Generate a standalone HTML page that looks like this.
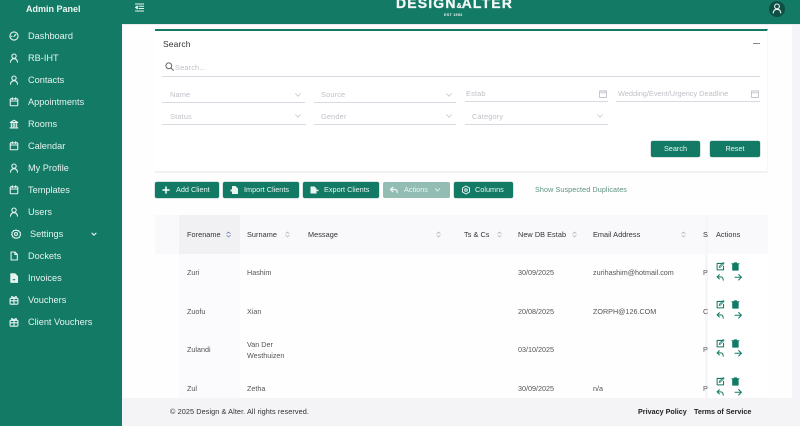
<!DOCTYPE html>
<html lang="en"><head><meta charset="utf-8"><title>Admin Panel</title>
<style>
*{box-sizing:border-box;margin:0;padding:0}
html,body{width:800px;height:426px;overflow:hidden;background:#f5f4f8;font-family:"Liberation Sans",sans-serif}
#r{position:relative;width:800px;height:426px;overflow:hidden;filter:blur(.3px)}
.a{position:absolute}
.t{position:absolute;white-space:nowrap;line-height:12px}
.nav{position:absolute;left:28px;margin-top:.5px;color:#e6f3ef;font-size:9.200px;line-height:14px;white-space:nowrap;letter-spacing:0}
svg{position:absolute;fill:none;stroke-linecap:round;stroke-linejoin:round}
.ni{left:9px;margin-top:1.500px;width:10px;height:10px;stroke:#e6f3ef;stroke-width:1.300}
.ph{color:#c2c0c8;font-size:7.400px;letter-spacing:.15px}
.ln{position:absolute;height:1px;background:#dad8e0}
.chev{width:8px;height:6px;stroke:#cbc9d0;stroke-width:.8}
.btn{position:absolute;height:16px;background:#137a66;border-radius:2px;color:#eaf5f1;font-size:7.300px;line-height:16px;white-space:nowrap;box-shadow:0 0 1px #0c5a4b}
.btn span{position:absolute;top:0}
.btn svg{top:3px;width:10px;height:10px}
.th{color:#333;font-size:7.300px;margin-top:1px;letter-spacing:.05px}
.td{color:#555;font-size:7.200px;margin-top:.5px;letter-spacing:0}
.sort{width:5px;height:7px;stroke:#b8b6bd;stroke-width:.9;margin-top:1px}
.ic{width:8.500px;height:8.500px;stroke:#137a66;stroke-width:1.200}
</style></head><body><div id="r">

<div class="a" style="left:123px;top:24px;width:669px;height:374px;background:#fefefe"></div>
<div class="a" style="left:0;top:0;width:800px;height:24px;background:#137a66"></div>
<div class="a" style="left:123px;top:24px;width:677px;height:1px;background:#eceaf0"></div>
<div class="a" style="left:0;top:0;width:122px;height:426px;background:#137a66"></div>

<div class="t" style="left:26px;top:2px;margin-top:1px;color:#eef7f4;font-size:9px;font-weight:700">Admin Panel</div>
<svg style="left:135px;top:3px;width:9px;height:9px;stroke:#e6f3ef;stroke-width:1" viewBox="0 0 9 9"><path d="M0 1h9M4 3.200h5M4 5.500h5M0 8h9"/><path d="M2.400 3L.4 4.400l2 1.400z" fill="#e6f3ef"/></svg>

<div class="t" style="left:396px;top:-4px;width:116px;text-align:center;color:#f2f8f6;font-size:14px;font-weight:700;line-height:14px;letter-spacing:1.150px;-webkit-text-stroke:.3px #f2f8f6">DESIGN<span style="font-size:7px;letter-spacing:0">&amp;</span>ALTER</div>
<div class="t" style="left:444px;top:12.500px;color:#e6f3ef;font-size:3.800px;font-weight:700;line-height:5px;letter-spacing:.2px">EST 1993</div>

<div class="a" style="left:769px;top:1px;width:16px;height:16px;border-radius:50%;background:#0d4f45"></div>
<svg style="left:772px;top:3px;width:10px;height:11px;stroke:#f2f8f6;stroke-width:1.100" viewBox="0 0 10 11"><circle cx="5" cy="3.400" r="2.400"/><path d="M1.200 10c.3-2.600 1.700-3.700 3.800-3.700S8.500 7.400 8.800 10"/></svg>

<!-- sidebar icons -->
<svg class="ni" style="top:29px" viewBox="0 0 12 12"><circle cx="6" cy="6" r="4.900"/><path d="M6 6.500l2.200-2.500M2.800 6.500h.7"/></svg>
<svg class="ni" style="top:51px" viewBox="0 0 12 12"><circle cx="6" cy="3.800" r="2.600"/><path d="M1.800 11c.3-3 1.800-4.200 4.200-4.200s3.900 1.200 4.200 4.200"/></svg>
<svg class="ni" style="top:73px" viewBox="0 0 12 12"><circle cx="6" cy="3.800" r="2.600"/><path d="M1.800 11c.3-3 1.800-4.200 4.200-4.200s3.900 1.200 4.200 4.200"/></svg>
<svg class="ni" style="top:95px" viewBox="0 0 12 12"><rect x="1.500" y="2.200" width="9" height="8.300" rx=".8"/><path d="M1.500 4.800h9M4 1v2M8 1v2"/></svg>
<svg class="ni" style="top:117px" viewBox="0 0 12 12"><path d="M1.500 4.200L6 1.500l4.500 2.700zM2.800 5.500v4M5 5.500v4M7 5.500v4M9.200 5.500v4M1.200 10.700h9.600"/></svg>
<svg class="ni" style="top:139px" viewBox="0 0 12 12"><rect x="1.500" y="2.200" width="9" height="8.300" rx=".8"/><path d="M1.500 4.800h9M4 1v2M8 1v2"/></svg>
<svg class="ni" style="top:161px" viewBox="0 0 12 12"><circle cx="6" cy="3.800" r="2.600"/><path d="M1.800 11c.3-3 1.800-4.200 4.200-4.200s3.900 1.200 4.200 4.200"/></svg>
<svg class="ni" style="top:183px" viewBox="0 0 12 12"><rect x="1.500" y="2.200" width="9" height="8.300" rx=".8"/><path d="M1.500 4.800h9M4 1v2M8 1v2"/></svg>
<svg class="ni" style="top:205px" viewBox="0 0 12 12"><circle cx="6" cy="3.800" r="2.600"/><path d="M1.800 11c.3-3 1.800-4.200 4.200-4.200s3.900 1.200 4.200 4.200"/></svg>
<svg class="ni" style="left:11px;top:227px" viewBox="0 0 12 12"><path d="M6 1l1.300.9 1.600-.1.700 1.400 1.400.8-.2 1.600.7 1.400-1.100 1.100-.3 1.600-1.500.4L7.500 11 6 10.600 4.500 11 3.400 9.900l-1.500-.4-.3-1.600L.5 6.800l.7-1.400L1 3.800l1.400-.8.700-1.400 1.600.1z" transform="translate(.2 .1)"/><circle cx="6" cy="6" r="1.800"/></svg>
<svg class="ni" style="top:249px" viewBox="0 0 12 12"><path d="M2.500 1.200h4.700l2.800 2.800v6.800H2.500zM7 1.300V4.200h2.900"/></svg>
<svg class="ni" style="top:271px" viewBox="0 0 12 12"><path d="M2.200 1h5l3 3v7.200h-8z" fill="#e6f3ef"/><path d="M5.200 8h1.600" stroke="#137a66" stroke-width="1.400"/></svg>
<svg class="ni" style="top:293px" viewBox="0 0 12 12"><rect x="1.300" y="4" width="9.400" height="7" rx=".8"/><path d="M1.300 7h9.400M6 4v7M6 4C4 1 2.500 1.500 3.300 3.400 3.600 4 5 4 6 4c1 0 2.400 0 2.700-.6C9.500 1.500 8 1 6 4z"/></svg>
<svg class="ni" style="top:315px" viewBox="0 0 12 12"><rect x="1.300" y="4" width="9.400" height="7" rx=".8"/><path d="M1.300 7h9.400M6 4v7M6 4C4 1 2.500 1.500 3.300 3.400 3.600 4 5 4 6 4c1 0 2.400 0 2.700-.6C9.500 1.500 8 1 6 4z"/></svg>

<div class="nav" style="top:28px">Dashboard</div>
<div class="nav" style="top:50px">RB-IHT</div>
<div class="nav" style="top:72px">Contacts</div>
<div class="nav" style="top:94px">Appointments</div>
<div class="nav" style="top:116px">Rooms</div>
<div class="nav" style="top:138px">Calendar</div>
<div class="nav" style="top:160px">My Profile</div>
<div class="nav" style="top:182px">Templates</div>
<div class="nav" style="top:204px">Users</div>
<div class="nav" style="left:30px;top:226px">Settings</div>
<svg style="left:91px;top:232px;width:6px;height:5px;stroke:#e6f3ef;stroke-width:1.100" viewBox="0 0 6 5"><path d="M1 1.200l2 2 2-2"/></svg>
<div class="nav" style="top:248px">Dockets</div>
<div class="nav" style="top:270px">Invoices</div>
<div class="nav" style="top:292px">Vouchers</div>
<div class="nav" style="top:314px">Client Vouchers</div>

<!-- search card -->
<div class="a" style="left:155px;top:29px;width:613px;height:144px;background:#fff;border-top:2px solid #137a66;border-bottom:2px solid #f2f1f4;border-right:1px solid #f7f6f9"></div>
<div class="t" style="left:163px;top:38px;color:#333;font-size:8.500px;letter-spacing:.1px">Search</div>
<div class="a" style="left:753px;top:43px;width:7px;height:1px;background:#888"></div>
<svg style="left:165px;top:62px;width:9px;height:9px;stroke:#666;stroke-width:1" viewBox="0 0 9 9"><circle cx="3.800" cy="3.800" r="2.900"/><path d="M6 6l2.400 2.400"/></svg>
<div class="t ph" style="left:175px;top:61.500px">Search...</div>
<div class="ln" style="left:162px;top:76px;width:598px"></div>

<div class="t ph" style="left:170px;top:89px">Name</div>
<svg class="chev" style="left:294px;top:92px" viewBox="0 0 8 6"><path d="M1.500 1.500L4 4.300l2.500-2.800"/></svg>
<div class="ln" style="left:162px;top:102px;width:143px"></div>
<div class="t ph" style="left:321px;top:89px">Source</div>
<svg class="chev" style="left:445px;top:92px" viewBox="0 0 8 6"><path d="M1.500 1.500L4 4.300l2.500-2.800"/></svg>
<div class="ln" style="left:314px;top:102px;width:142px"></div>
<div class="t ph" style="left:466px;top:88px">Estab</div>
<svg style="left:599px;top:90px;width:8px;height:8px;stroke:#c6c4cc;stroke-width:.9" viewBox="0 0 8 8"><rect x=".5" y="1" width="7" height="6.500"/><path d="M.5 2.800h7M2.200 0v1.500M5.800 0v1.500"/></svg>
<div class="ln" style="left:465px;top:101px;width:143px"></div>
<div class="t ph" style="left:618px;top:88px;letter-spacing:-.02px">Wedding/Event/Urgency Deadline</div>
<svg style="left:751px;top:90px;width:8px;height:8px;stroke:#c6c4cc;stroke-width:.9" viewBox="0 0 8 8"><rect x=".5" y="1" width="7" height="6.500"/><path d="M.5 2.800h7"/></svg>
<div class="ln" style="left:616px;top:101px;width:144px"></div>

<div class="t ph" style="left:170px;top:111px">Status</div>
<svg class="chev" style="left:294px;top:113px" viewBox="0 0 8 6"><path d="M1.500 1.500L4 4.300l2.500-2.800"/></svg>
<div class="ln" style="left:162px;top:124px;width:144px"></div>
<div class="t ph" style="left:321px;top:111px">Gender</div>
<svg class="chev" style="left:445px;top:113px" viewBox="0 0 8 6"><path d="M1.500 1.500L4 4.300l2.500-2.800"/></svg>
<div class="ln" style="left:314px;top:124px;width:142px"></div>
<div class="t ph" style="left:472px;top:111px">Category</div>
<svg class="chev" style="left:596px;top:113px" viewBox="0 0 8 6"><path d="M1.500 1.500L4 4.300l2.500-2.800"/></svg>
<div class="ln" style="left:465px;top:124px;width:143px"></div>

<div class="btn" style="left:651px;top:141px;width:49px;text-align:center">Search</div>
<div class="btn" style="left:710px;top:141px;width:50px;text-align:center">Reset</div>

<!-- toolbar -->
<div class="btn" style="left:155px;top:182px;width:64px"><svg style="left:6px;stroke:#fff;stroke-width:1.500" viewBox="0 0 10 10"><path d="M5 2v6M2 5h6"/></svg><span style="left:21px">Add Client</span></div>
<div class="btn" style="left:223px;top:182px;width:76px"><svg style="left:6px;fill:#eaf5f1;stroke:none" viewBox="0 0 10 10"><path d="M3 1h3.500L9 3.500V9H3V6.500H1.500v-2H3z"/></svg><span style="left:21px">Import Clients</span></div>
<div class="btn" style="left:303px;top:182px;width:76px"><svg style="left:6px;fill:#eaf5f1;stroke:none" viewBox="0 0 10 10"><path d="M1.500 1.500h4L7.500 3.500v1.200H9.500v1.400H7.500V8.500h-6z"/></svg><span style="left:21px">Export Clients</span></div>
<div class="btn" style="left:383px;top:182px;width:67px;background:#93bdb3;box-shadow:none"><svg style="left:6px;stroke:#eaf5f1;stroke-width:1.300" viewBox="0 0 10 10"><path d="M4 2.300L1.500 4.500 4 6.700M1.800 4.500H6c1.500 0 2.200 1 2.300 3"/></svg><span style="left:21px">Actions</span><svg style="left:51px;top:5px;width:7px;height:6px;stroke:#eaf5f1;stroke-width:.9" viewBox="0 0 8 6"><path d="M1.500 1.500L4 4.300l2.500-2.800"/></svg></div>
<div class="btn" style="left:454px;top:182px;width:59px"><svg style="left:7px;stroke:#eaf5f1;stroke-width:1" viewBox="0 0 10 10"><path d="M5 1l3.500 2v4L5 9 1.500 7V3z"/><circle cx="5" cy="5" r="1.300"/></svg><span style="left:21px">Columns</span></div>
<div class="t" style="left:535px;top:184px;color:#5d9283;font-size:7.200px;letter-spacing:.1px">Show Suspected Duplicates</div>

<!-- table -->
<div class="a" style="left:155px;top:215px;width:613px;height:39px;background:#f9f8fb"></div>
<div class="a" style="left:179px;top:215px;width:61px;height:39px;background:#f1f0f3"></div>
<div class="a" style="left:179px;top:254px;width:61px;height:144px;background:#fbfafc"></div>
<div class="a" style="left:706px;top:254px;width:62px;height:144px;background:#fff"></div>
<div class="a" style="left:705px;top:215px;width:3px;height:183px;background:#f6f5f8"></div>

<div class="t th" style="left:187px;top:228px">Forename</div>
<svg class="sort" style="left:226px;top:230px;stroke:#6a7fc4" viewBox="0 0 6 8"><path d="M1 3l2-2 2 2M1 5l2 2 2-2"/></svg>
<div class="t th" style="left:247px;top:228px">Surname</div>
<svg class="sort" style="left:285px;top:230px" viewBox="0 0 6 8"><path d="M1 3l2-2 2 2M1 5l2 2 2-2"/></svg>
<div class="t th" style="left:308px;top:228px">Message</div>
<svg class="sort" style="left:436px;top:230px" viewBox="0 0 6 8"><path d="M1 3l2-2 2 2M1 5l2 2 2-2"/></svg>
<div class="t th" style="left:464px;top:228px">Ts &amp; Cs</div>
<svg class="sort" style="left:497px;top:230px" viewBox="0 0 6 8"><path d="M1 3l2-2 2 2M1 5l2 2 2-2"/></svg>
<div class="t th" style="left:518px;top:228px">New DB Estab</div>
<svg class="sort" style="left:572px;top:230px" viewBox="0 0 6 8"><path d="M1 3l2-2 2 2M1 5l2 2 2-2"/></svg>
<div class="t th" style="left:593px;top:228px">Email Address</div>
<svg class="sort" style="left:681px;top:230px" viewBox="0 0 6 8"><path d="M1 3l2-2 2 2M1 5l2 2 2-2"/></svg>
<div class="t th" style="left:703px;top:228px">S</div>
<div class="t th" style="left:716px;top:228px">Actions</div>

<div class="t td" style="left:187px;top:266px">Zuri</div>
<div class="t td" style="left:247px;top:266px">Hashim</div>
<div class="t td" style="left:518px;top:266px">30/09/2025</div>
<div class="t td" style="left:593px;top:266px">zurihashim@hotmail.com</div>
<div class="t td" style="left:703px;top:266px">P</div>

<div class="t td" style="left:187px;top:305px">Zuofu</div>
<div class="t td" style="left:247px;top:305px">Xian</div>
<div class="t td" style="left:518px;top:305px">20/08/2025</div>
<div class="t td" style="left:593px;top:305px">ZORPH@126.COM</div>
<div class="t td" style="left:703px;top:305px">C</div>

<div class="t td" style="left:187px;top:343px">Zulandi</div>
<div class="t td" style="left:247px;top:338px">Van Der</div>
<div class="t td" style="left:247px;top:349px">Westhuizen</div>
<div class="t td" style="left:518px;top:343px">03/10/2025</div>
<div class="t td" style="left:703px;top:343px">P</div>

<div class="t td" style="left:187px;top:382px">Zul</div>
<div class="t td" style="left:247px;top:382px">Zetha</div>
<div class="t td" style="left:518px;top:382px">30/09/2025</div>
<div class="t td" style="left:593px;top:382px">n/a</div>
<div class="t td" style="left:703px;top:382px">P</div>

<svg width="0" height="0" style="position:absolute"><defs>
<g id="e"><path d="M8 1.700H1.300v7.600h7.600V5"/><path d="M3.700 6.500l.4-1.600L8.500.6l1 1L5.200 6z" stroke-width=".9"/></g>
<g id="d"><path d="M2 3h6.400v6.500H2zM1 2h8.400M3.800 1h2.800" fill="#137a66"/></g>
<g id="b"><path d="M4 2L1.300 4.500 4 7M1.600 4.500H5.500C7.500 4.500 8.500 5.800 8.500 8.500"/></g>
<g id="f"><path d="M1.200 5h7.400M5.500 1.800L8.700 5 5.500 8.200"/></g>
</defs></svg>

<svg class="ic" style="left:716px;top:262px" viewBox="0 0 10 10"><use href="#e"/></svg>
<svg class="ic" style="left:731px;top:262px" viewBox="0 0 10 10"><use href="#d"/></svg>
<svg class="ic" style="left:716px;top:273px" viewBox="0 0 10 10"><use href="#b"/></svg>
<svg class="ic" style="left:733.500px;top:273px" viewBox="0 0 10 10"><use href="#f"/></svg>

<svg class="ic" style="left:716px;top:300px" viewBox="0 0 10 10"><use href="#e"/></svg>
<svg class="ic" style="left:731px;top:300px" viewBox="0 0 10 10"><use href="#d"/></svg>
<svg class="ic" style="left:716px;top:311px" viewBox="0 0 10 10"><use href="#b"/></svg>
<svg class="ic" style="left:733.500px;top:311px" viewBox="0 0 10 10"><use href="#f"/></svg>

<svg class="ic" style="left:716px;top:339px" viewBox="0 0 10 10"><use href="#e"/></svg>
<svg class="ic" style="left:731px;top:339px" viewBox="0 0 10 10"><use href="#d"/></svg>
<svg class="ic" style="left:716px;top:349px" viewBox="0 0 10 10"><use href="#b"/></svg>
<svg class="ic" style="left:733.500px;top:349px" viewBox="0 0 10 10"><use href="#f"/></svg>

<svg class="ic" style="left:716px;top:377px" viewBox="0 0 10 10"><use href="#e"/></svg>
<svg class="ic" style="left:731px;top:377px" viewBox="0 0 10 10"><use href="#d"/></svg>
<svg class="ic" style="left:716px;top:388px" viewBox="0 0 10 10"><use href="#b"/></svg>
<svg class="ic" style="left:733.500px;top:388px" viewBox="0 0 10 10"><use href="#f"/></svg>

<!-- footer -->
<div class="a" style="left:123px;top:398px;width:677px;height:28px;background:#f4f3f6"></div>
<div class="t" style="left:170px;top:406px;color:#333;font-size:7.300px;letter-spacing:.08px">© 2025 Design &amp; Alter. All rights reserved.</div>
<div class="t" style="left:638px;top:406px;color:#222;font-size:7.200px;font-weight:700">Privacy Policy</div>
<div class="t" style="left:694px;top:406px;color:#222;font-size:7.200px;font-weight:700">Terms of Service</div>

</div></body></html>
